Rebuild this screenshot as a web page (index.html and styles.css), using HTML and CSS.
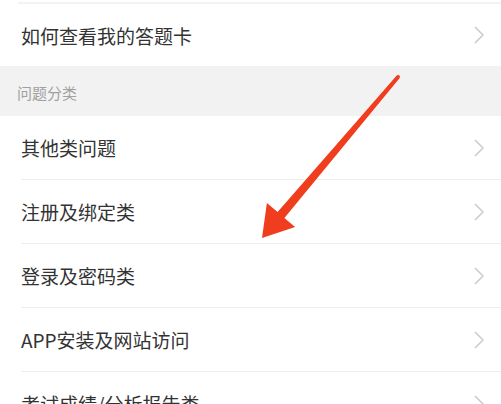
FILE: index.html
```html
<!DOCTYPE html>
<html lang="zh-CN">
<head>
<meta charset="utf-8">
<title>帮助中心</title>
<link rel="stylesheet" href="styles.css">
</head>
<body>
<div class="page">
  <div class="group">
    <div class="item">
      <div class="item-inner first">
        <span class="label">如何查看我的答题卡</span>
        <svg class="chev" width="10" height="18" viewBox="0 0 10 18"><polyline points="1,1 9,9 1,17" fill="none" stroke="#c9c9c9" stroke-width="1.5"/></svg>
      </div>
    </div>
  </div>
  <div class="section">问题分类</div>
  <div class="group">
    <div class="item">
      <div class="item-inner">
        <span class="label">其他类问题</span>
        <svg class="chev" width="10" height="18" viewBox="0 0 10 18"><polyline points="1,1 9,9 1,17" fill="none" stroke="#c9c9c9" stroke-width="1.5"/></svg>
      </div>
    </div>
    <div class="item">
      <div class="item-inner">
        <span class="label">注册及绑定类</span>
        <svg class="chev" width="10" height="18" viewBox="0 0 10 18"><polyline points="1,1 9,9 1,17" fill="none" stroke="#c9c9c9" stroke-width="1.5"/></svg>
      </div>
    </div>
    <div class="item">
      <div class="item-inner">
        <span class="label">登录及密码类</span>
        <svg class="chev" width="10" height="18" viewBox="0 0 10 18"><polyline points="1,1 9,9 1,17" fill="none" stroke="#c9c9c9" stroke-width="1.5"/></svg>
      </div>
    </div>
    <div class="item">
      <div class="item-inner">
        <span class="label">APP安装及网站访问</span>
        <svg class="chev" width="10" height="18" viewBox="0 0 10 18"><polyline points="1,1 9,9 1,17" fill="none" stroke="#c9c9c9" stroke-width="1.5"/></svg>
      </div>
    </div>
    <div class="item">
      <div class="item-inner">
        <span class="label">考试成绩/分析报告类</span>
        <svg class="chev" width="10" height="18" viewBox="0 0 10 18"><polyline points="1,1 9,9 1,17" fill="none" stroke="#c9c9c9" stroke-width="1.5"/></svg>
      </div>
    </div>
  </div>
  <svg class="arrow" width="501" height="404" viewBox="0 0 501 404">
    <polygon points="396.5,75.7 277.6,212.1 266.9,203.1 262,238 295.1,226.9 284.4,217.9 399.5,78.3 400,76 398,74.8" fill="#f03d1d"/>
  </svg>
</div>
</body>
</html>
```
FILE: styles.css
```css
html, body {
  margin: 0;
  padding: 0;
  background: #ffffff;
}
body {
  font-family: "Noto Sans CJK SC", "Noto Sans", sans-serif;
  color: #333333;
  width: 501px;
  height: 404px;
  overflow: hidden;
}
.page {
  position: relative;
  width: 501px;
  height: 404px;
  overflow: hidden;
}
.group {
  background: #ffffff;
}
.item {
  padding-left: 21px;
}
.item-inner {
  height: 63px;
  border-bottom: 1px solid #ededed;
  display: flex;
  align-items: center;
  justify-content: space-between;
  padding-right: 17px;
}
.item-inner.first {
  margin-top: 2px;
  margin-left: -3px;
  padding-left: 3px;
  border-top: 2px solid #f3f3f3;
  border-bottom: none;
  height: 62px;
}
.label {
  font-size: 19px;
  line-height: 1;
  color: #333333;
}
.chev {
  display: block;
  flex: none;
}
.section {
  height: 50px;
  background: #f2f2f2;
  display: flex;
  align-items: center;
  padding-left: 17px;
  padding-top: 3px;
  box-sizing: border-box;
  font-size: 15px;
  color: #a0a0a0;
}
.arrow {
  position: absolute;
  left: 0;
  top: 0;
  pointer-events: none;
}
```
